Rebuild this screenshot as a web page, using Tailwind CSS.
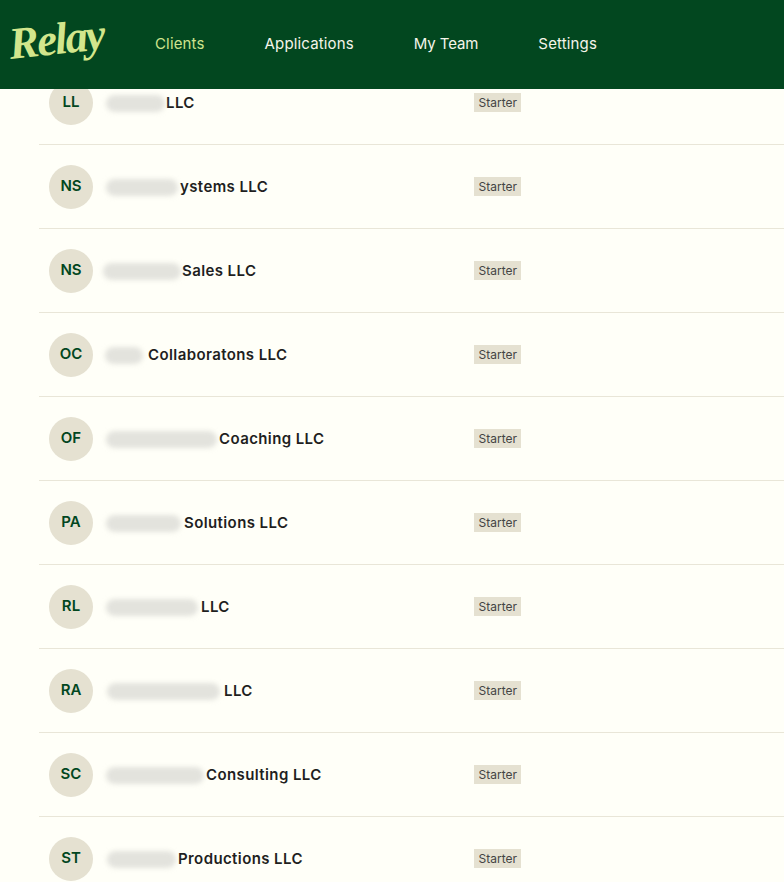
<!DOCTYPE html>
<html lang="en">
<head>
<meta charset="utf-8">
<title>Relay Clients</title>
<script src="https://cdn.jsdelivr.net/npm/@tailwindcss/browser@4"></script>
</head>
<body class="bg-[#fffff8] font-['Inter','Noto_Sans',sans-serif]">
<div class="h-[882px] overflow-hidden">
  <header class="relative z-10 flex h-[89px] items-center bg-[#02471f]">
    <div class="w-[155px] pl-[9px]"><a class="inline-block origin-left -rotate-6 text-[45px] leading-none font-bold italic tracking-[-2px] text-[#d2e68c] font-['Liberation_Serif',serif]">Relay</a></div>
    <nav class="-mt-[2px] flex gap-[60px] text-[15px] leading-none tracking-[0.15px]">
      <a class="text-[#cfe38d]">Clients</a>
      <a class="text-[#f5f5ea]">Applications</a>
      <a class="tracking-[-0.1px] text-[#f5f5ea]">My Team</a>
      <a class="text-[#f5f5ea]">Settings</a>
    </nav>
  </header>
  <main class="-mt-[28px] ml-[39px]">
    <div class="flex h-[84px] items-center border-b border-[#e9e6d8]">
      <div class="ml-[10px] flex h-[44px] w-[44px] shrink-0 items-center justify-center rounded-full bg-[#e5e1d1] text-[15px] font-semibold text-[#02471f]">LL</div>
      <div class="mt-[2px] flex w-[381px] shrink-0 items-center text-[15px] font-semibold tracking-[0.4px] text-[#1f1f1f]">
        <span class="ml-[13px] mr-[1px] h-[17px] w-[59px] rounded-full bg-[#e3e3dd] blur-[2.5px]"></span><span>LLC</span>
      </div>
      <span class="bg-[#e5e1d1] px-[4.5px] py-[3px] text-[12px] leading-[13px] text-[#444]">Starter</span>
    </div>
    <div class="flex h-[84px] items-center border-b border-[#e9e6d8]">
      <div class="ml-[10px] flex h-[44px] w-[44px] shrink-0 items-center justify-center rounded-full bg-[#e5e1d1] text-[15px] font-semibold text-[#02471f]">NS</div>
      <div class="mt-[2px] flex w-[381px] shrink-0 items-center text-[15px] font-semibold tracking-[0.4px] text-[#1f1f1f]">
        <span class="ml-[13px] mr-[2px] h-[17px] w-[72px] rounded-full bg-[#e3e3dd] blur-[2.5px]"></span><span>ystems LLC</span>
      </div>
      <span class="bg-[#e5e1d1] px-[4.5px] py-[3px] text-[12px] leading-[13px] text-[#444]">Starter</span>
    </div>
    <div class="flex h-[84px] items-center border-b border-[#e9e6d8]">
      <div class="ml-[10px] flex h-[44px] w-[44px] shrink-0 items-center justify-center rounded-full bg-[#e5e1d1] text-[15px] font-semibold text-[#02471f]">NS</div>
      <div class="mt-[2px] flex w-[381px] shrink-0 items-center text-[15px] font-semibold tracking-[0.4px] text-[#1f1f1f]">
        <span class="ml-[10px] mr-[1px] h-[17px] w-[78px] rounded-full bg-[#e3e3dd] blur-[2.5px]"></span><span>Sales LLC</span>
      </div>
      <span class="bg-[#e5e1d1] px-[4.5px] py-[3px] text-[12px] leading-[13px] text-[#444]">Starter</span>
    </div>
    <div class="flex h-[84px] items-center border-b border-[#e9e6d8]">
      <div class="ml-[10px] flex h-[44px] w-[44px] shrink-0 items-center justify-center rounded-full bg-[#e5e1d1] text-[15px] font-semibold text-[#02471f]">OC</div>
      <div class="mt-[2px] flex w-[381px] shrink-0 items-center text-[15px] font-semibold tracking-[0.4px] text-[#1f1f1f]">
        <span class="ml-[12px] mr-[5px] h-[17px] w-[38px] rounded-full bg-[#e3e3dd] blur-[2.5px]"></span><span>Collaboratons LLC</span>
      </div>
      <span class="bg-[#e5e1d1] px-[4.5px] py-[3px] text-[12px] leading-[13px] text-[#444]">Starter</span>
    </div>
    <div class="flex h-[84px] items-center border-b border-[#e9e6d8]">
      <div class="ml-[10px] flex h-[44px] w-[44px] shrink-0 items-center justify-center rounded-full bg-[#e5e1d1] text-[15px] font-semibold text-[#02471f]">OF</div>
      <div class="mt-[2px] flex w-[381px] shrink-0 items-center text-[15px] font-semibold tracking-[0.4px] text-[#1f1f1f]">
        <span class="ml-[13px] mr-[2px] h-[17px] w-[111px] rounded-full bg-[#e3e3dd] blur-[2.5px]"></span><span>Coaching LLC</span>
      </div>
      <span class="bg-[#e5e1d1] px-[4.5px] py-[3px] text-[12px] leading-[13px] text-[#444]">Starter</span>
    </div>
    <div class="flex h-[84px] items-center border-b border-[#e9e6d8]">
      <div class="ml-[10px] flex h-[44px] w-[44px] shrink-0 items-center justify-center rounded-full bg-[#e5e1d1] text-[15px] font-semibold text-[#02471f]">PA</div>
      <div class="mt-[2px] flex w-[381px] shrink-0 items-center text-[15px] font-semibold tracking-[0.4px] text-[#1f1f1f]">
        <span class="ml-[13px] mr-[3px] h-[17px] w-[75px] rounded-full bg-[#e3e3dd] blur-[2.5px]"></span><span>Solutions LLC</span>
      </div>
      <span class="bg-[#e5e1d1] px-[4.5px] py-[3px] text-[12px] leading-[13px] text-[#444]">Starter</span>
    </div>
    <div class="flex h-[84px] items-center border-b border-[#e9e6d8]">
      <div class="ml-[10px] flex h-[44px] w-[44px] shrink-0 items-center justify-center rounded-full bg-[#e5e1d1] text-[15px] font-semibold text-[#02471f]">RL</div>
      <div class="mt-[2px] flex w-[381px] shrink-0 items-center text-[15px] font-semibold tracking-[0.4px] text-[#1f1f1f]">
        <span class="ml-[13px] mr-[3px] h-[17px] w-[92px] rounded-full bg-[#e3e3dd] blur-[2.5px]"></span><span>LLC</span>
      </div>
      <span class="bg-[#e5e1d1] px-[4.5px] py-[3px] text-[12px] leading-[13px] text-[#444]">Starter</span>
    </div>
    <div class="flex h-[84px] items-center border-b border-[#e9e6d8]">
      <div class="ml-[10px] flex h-[44px] w-[44px] shrink-0 items-center justify-center rounded-full bg-[#e5e1d1] text-[15px] font-semibold text-[#02471f]">RA</div>
      <div class="mt-[2px] flex w-[381px] shrink-0 items-center text-[15px] font-semibold tracking-[0.4px] text-[#1f1f1f]">
        <span class="ml-[14px] mr-[4px] h-[17px] w-[113px] rounded-full bg-[#e3e3dd] blur-[2.5px]"></span><span>LLC</span>
      </div>
      <span class="bg-[#e5e1d1] px-[4.5px] py-[3px] text-[12px] leading-[13px] text-[#444]">Starter</span>
    </div>
    <div class="flex h-[84px] items-center border-b border-[#e9e6d8]">
      <div class="ml-[10px] flex h-[44px] w-[44px] shrink-0 items-center justify-center rounded-full bg-[#e5e1d1] text-[15px] font-semibold text-[#02471f]">SC</div>
      <div class="mt-[2px] flex w-[381px] shrink-0 items-center text-[15px] font-semibold tracking-[0.4px] text-[#1f1f1f]">
        <span class="ml-[13px] mr-[2px] h-[17px] w-[98px] rounded-full bg-[#e3e3dd] blur-[2.5px]"></span><span>Consulting LLC</span>
      </div>
      <span class="bg-[#e5e1d1] px-[4.5px] py-[3px] text-[12px] leading-[13px] text-[#444]">Starter</span>
    </div>
    <div class="flex h-[84px] items-center border-b border-[#e9e6d8]">
      <div class="ml-[10px] flex h-[44px] w-[44px] shrink-0 items-center justify-center rounded-full bg-[#e5e1d1] text-[15px] font-semibold text-[#02471f]">ST</div>
      <div class="mt-[2px] flex w-[381px] shrink-0 items-center text-[15px] font-semibold tracking-[0.4px] text-[#1f1f1f]">
        <span class="ml-[14px] mr-[2px] h-[17px] w-[69px] rounded-full bg-[#e3e3dd] blur-[2.5px]"></span><span>Productions LLC</span>
      </div>
      <span class="bg-[#e5e1d1] px-[4.5px] py-[3px] text-[12px] leading-[13px] text-[#444]">Starter</span>
    </div>
  </main>
</div>
</body>
</html>
